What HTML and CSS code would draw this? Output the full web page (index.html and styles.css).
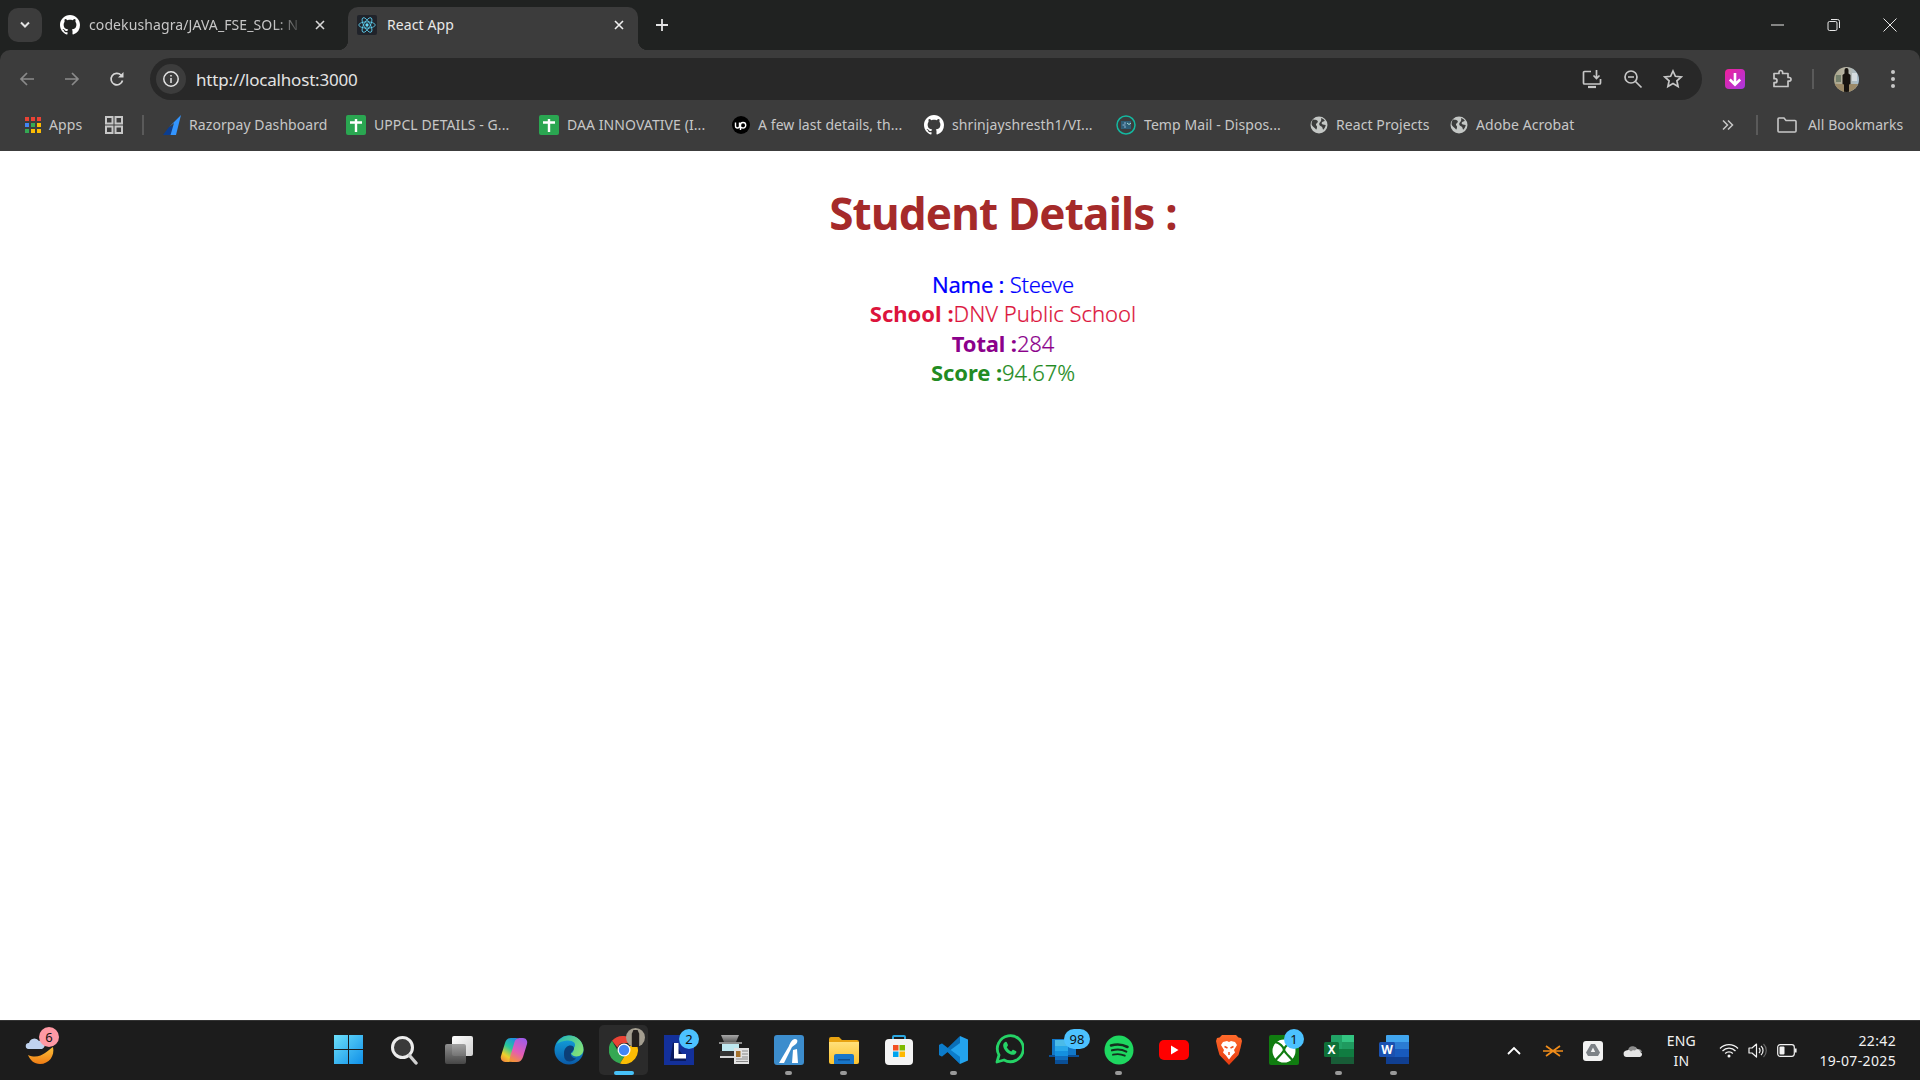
FILE: index.html
```html
<!DOCTYPE html>
<html lang="en">
<head>
<meta charset="UTF-8">
<meta name="viewport" content="width=device-width, initial-scale=1.0">
<title>React App</title>
<link rel="stylesheet" href="styles.css">
</head>
<body>

<svg class="sprite" width="0" height="0">
    <symbol id="github" viewBox="0 0 16 16">
        <path fill="currentColor" d="M8 0C3.58 0 0 3.58 0 8c0 3.54 2.29 6.53 5.47 7.59.4.07.55-.17.55-.38 0-.19-.01-.82-.01-1.49-2.01.37-2.53-.49-2.69-.94-.09-.23-.48-.94-.82-1.13-.28-.15-.68-.52-.01-.53.63-.01 1.08.58 1.23.82.72 1.21 1.87.87 2.33.66.07-.52.28-.87.51-1.07-1.78-.2-3.64-.89-3.64-3.95 0-.87.31-1.59.82-2.15-.08-.2-.36-1.02.08-2.12 0 0 .67-.21 2.2.82.64-.18 1.32-.27 2-.27s1.36.09 2 .27c1.53-1.04 2.2-.82 2.2-.82.44 1.1.16 1.92.08 2.12.51.56.82 1.27.82 2.15 0 3.07-1.87 3.75-3.65 3.95.29.25.54.73.54 1.48 0 1.07-.01 1.93-.01 2.2 0 .21.15.46.55.38A8.01 8.01 0 0 0 16 8c0-4.42-3.58-8-8-8z"/>
    </symbol>
    <symbol id="sheet" viewBox="0 0 20 20">
        <rect width="20" height="20" rx="2" fill="#2aa651"/>
        <path d="M4 7.5h12M10 4v13" stroke="#fff" stroke-width="2.4" fill="none"/>
    </symbol>
    <symbol id="globe" viewBox="0 0 18 18">
        <circle cx="9" cy="9" r="8.5" fill="#c4c7c5"/>
        <path fill="#3c3c3c" d="M3 3.6c1.7.3 3 .2 4.2 1 1.2.9.6 2-.4 2.6-1.1.7-1 1.8-.2 2.5.8.8.4 1.7.1 3.1-.2 1-.9.6-1.5-.4C3.6 11 2 9.8 1.6 8.5 1.5 6.5 2 5 3 3.6zM11 2c1.5.4 3 1.4 3.8 2.8-.9.9-2 .6-2.8 1.4-.8.9-.3 1.8.8 2.2 1 .4 2 .3 2.9.7-.2 1.8-1.1 3.5-2.6 4.6-.6-1.3-.5-2.5-1.7-3.2-1.2-.7-2.3-1.4-2.2-2.8.1-1.3 1.5-1.7 1.9-3 .2-.9.2-1.8-.1-2.7z"/>
    </symbol>
</svg>

<div class="browser">
    <div class="tabstrip">
        <button class="tab-search">
            <svg width="12" height="8" viewBox="0 0 12 8"><path d="M2 1.5l4 4 4-4" fill="none" stroke="#e3e3e3" stroke-width="2"/></svg>
        </button>
        <div class="tab">
            <svg class="tab-icon github-white" width="20" height="20"><use href="#github"/></svg>
            <span class="tab-title faded">codekushagra/JAVA_FSE_SOL: N</span>
            <span class="tab-close">
                <svg width="10" height="10" viewBox="0 0 10 10"><path d="M1 1l8 8M9 1l-8 8" stroke="#d8d8d8" stroke-width="1.6"/></svg>
            </span>
        </div>
        <div class="tab active">
            <span class="react-box">
                <svg width="18" height="18" viewBox="-12 -12 24 24" fill="none" stroke="#61dafb" stroke-width="1">
                    <circle r="2.2" fill="#61dafb" stroke="none"/>
                    <ellipse rx="11" ry="4.2"/>
                    <ellipse rx="11" ry="4.2" transform="rotate(60)"/>
                    <ellipse rx="11" ry="4.2" transform="rotate(120)"/>
                </svg>
            </span>
            <span class="tab-title">React App</span>
            <span class="tab-close">
                <svg width="10" height="10" viewBox="0 0 10 10"><path d="M1 1l8 8M9 1l-8 8" stroke="#f0f0f0" stroke-width="1.6"/></svg>
            </span>
        </div>
        <button class="new-tab">
            <svg width="14" height="14" viewBox="0 0 14 14"><path d="M7 1v12M1 7h12" stroke="#e3e3e3" stroke-width="1.8"/></svg>
        </button>
        <div class="window-controls">
            <span class="win-btn"><svg width="14" height="14" viewBox="0 0 14 14"><path d="M0 7h13" stroke="#e8e8e8" stroke-width="1"/></svg></span>
            <span class="win-btn"><svg width="14" height="14" viewBox="0 0 14 14" fill="none" stroke="#e8e8e8"><rect x="1" y="3.5" width="9" height="9" rx="1.5"/><path d="M4 1.5h6.5a2 2 0 0 1 2 2V10"/></svg></span>
            <span class="win-btn"><svg width="14" height="14" viewBox="0 0 14 14"><path d="M.5.5l13 13M13.5.5l-13 13" stroke="#e8e8e8" stroke-width="1"/></svg></span>
        </div>
    </div>

    <div class="toolbar">
        <span class="nav-btn">
            <svg width="18" height="18" viewBox="0 0 18 18" fill="none" stroke="#8a8a8a" stroke-width="1.7"><path d="M16 9H3M9 3L3 9l6 6"/></svg>
        </span>
        <span class="nav-btn">
            <svg width="18" height="18" viewBox="0 0 18 18" fill="none" stroke="#8a8a8a" stroke-width="1.7"><path d="M2 9h13M9 3l6 6-6 6"/></svg>
        </span>
        <span class="nav-btn">
            <svg width="18" height="18" viewBox="0 0 18 18" fill="none" stroke="#d6d6d6" stroke-width="1.7"><path d="M14.5 10.5A5.8 5.8 0 1 1 13 5"/><path fill="#d6d6d6" stroke="none" d="M15.5 2v5.5H10z"/></svg>
        </span>
        <div class="omnibox">
            <span class="site-info">
                <svg width="18" height="18" viewBox="0 0 18 18" fill="none" stroke="#e3e3e3" stroke-width="1.5"><circle cx="9" cy="9" r="7.2"/><path d="M9 8v5M9 5v1.6"/></svg>
            </span>
            <span class="url">http://localhost:3000</span>
            <span class="omni-actions">
                <svg width="22" height="22" viewBox="0 0 22 22" fill="none" stroke="#c7c7c7" stroke-width="1.7"><path d="M10 3.5H3.5a1 1 0 0 0-1 1V15a1 1 0 0 0 1 1h15a1 1 0 0 0 1-1v-4"/><path d="M7 19h8" stroke-width="2.2"/><path d="M15.5 2v8M12.5 7.5l3 3 3-3"/></svg>
                <svg width="20" height="20" viewBox="0 0 20 20" fill="none" stroke="#c7c7c7" stroke-width="1.7"><circle cx="8" cy="8" r="6"/><path d="M5 8h6M12.5 12.5l6 6"/></svg>
                <svg width="20" height="20" viewBox="0 0 20 20" fill="none" stroke="#c7c7c7" stroke-width="1.7"><path d="M10 2l2.4 5.3 5.8.6-4.3 3.9 1.2 5.7L10 14.6l-5.1 2.9 1.2-5.7L1.8 7.9l5.8-.6z"/></svg>
            </span>
        </div>
        <div class="toolbar-right">
            <span class="ext-pink">
                <svg width="14" height="15" viewBox="0 0 14 15" fill="none" stroke="#fff" stroke-width="2.6"><path d="M7 1v11M1.8 7.5L7 12.7l5.2-5.2"/></svg>
            </span>
            <svg class="puzzle" width="20" height="20" viewBox="0 0 20 20" fill="none" stroke="#c7c7c7" stroke-width="1.7"><path d="M2 7V4.5h5V3.3a1.8 1.8 0 0 1 3.6 0v1.2h5.4V8.5h1.2a1.8 1.8 0 0 1 0 3.6H16V17.5H2v-3.8h1a2 2 0 0 0 0-4H2z" stroke-linejoin="round"/></svg>
            <span class="tool-sep"></span>
            <svg class="avatar" width="25" height="25" viewBox="0 0 25 25">
                <defs>
                    <clipPath id="avatarClip"><circle cx="12.5" cy="12.5" r="12.5"/></clipPath>
                    <linearGradient id="avatarBg" x1="0" y1="0" x2="1" y2="0"><stop offset="0" stop-color="#a9a58a"/><stop offset=".5" stop-color="#b9b6a8"/><stop offset="1" stop-color="#a8c0d0"/></linearGradient>
                </defs>
                <g clip-path="url(#avatarClip)">
                    <rect width="25" height="25" fill="url(#avatarBg)"/>
                    <rect y="17" width="25" height="8" fill="#9c8a68"/>
                    <rect x="18" y="6" width="5" height="8" fill="#d6dde0"/>
                    <rect x="2" y="8" width="5" height="7" fill="#74806c"/>
                    <path fill="#17130f" d="M10.5 3a2 2 0 0 1 4 0v3.5l2 1.5v9l-1.5.5V25h-5v-7.500L8.500 17V8l2-1.500z"/>
                </g>
            </svg>
            <svg class="menu-dots" width="4" height="18" viewBox="0 0 4 18" fill="#c7c7c7"><circle cx="2" cy="2" r="2"/><circle cx="2" cy="9" r="2"/><circle cx="2" cy="16" r="2"/></svg>
        </div>
    </div>

    <div class="bookmarks">
        <a class="bm">
            <svg width="16" height="16" viewBox="0 0 16 16">
                <rect x="0" y="0" width="4" height="4" fill="#ea4335"/><rect x="6" y="0" width="4" height="4" fill="#ea4335"/><rect x="12" y="0" width="4" height="4" fill="#ea4335"/>
                <rect x="0" y="6" width="4" height="4" fill="#4285f4"/><rect x="6" y="6" width="4" height="4" fill="#34a853"/><rect x="12" y="6" width="4" height="4" fill="#fbbc04"/>
                <rect x="0" y="12" width="4" height="4" fill="#34a853"/><rect x="6" y="12" width="4" height="4" fill="#fbbc04"/><rect x="12" y="12" width="4" height="4" fill="#fbbc04"/>
            </svg>
            <span>Apps</span>
        </a>
        <a class="bm">
            <svg width="18" height="18" viewBox="0 0 18 18" fill="none" stroke="#c7c7c7" stroke-width="2"><rect x="1" y="1" width="6.5" height="6.5"/><rect x="10.5" y="1" width="6.5" height="6.5"/><rect x="1" y="10.5" width="6.5" height="6.5"/><rect x="10.5" y="10.5" width="6.5" height="6.5"/></svg>
        </a>
        <span class="bm-sep"></span>
        <a class="bm">
            <svg width="18" height="20" viewBox="0 0 18 20"><path fill="#0b3d8f" d="M0 20l6-8 4-1-2.5 9z"/><path fill="#3395ff" d="M6 12L18 0l-5 20H7.500L11 8z"/></svg>
            <span>Razorpay Dashboard</span>
        </a>
        <a class="bm">
            <svg width="20" height="20"><use href="#sheet"/></svg>
            <span>UPPCL DETAILS - G...</span>
        </a>
        <a class="bm">
            <svg width="20" height="20"><use href="#sheet"/></svg>
            <span>DAA INNOVATIVE (I...</span>
        </a>
        <a class="bm">
            <svg width="18" height="18" viewBox="0 0 18 18"><circle cx="9" cy="9" r="9" fill="#000"/><path d="M3.5 6.5V10a2 2 0 0 0 4 0V6.5c0 3 1 5.5 3.5 5.5a2.7 2.7 0 0 0 0-5.5 2.5 2.5 0 0 0-2.500 2.500V14" fill="none" stroke="#fff" stroke-width="1.4"/></svg>
            <span>A few last details, th...</span>
        </a>
        <a class="bm">
            <svg class="github-white" width="20" height="20"><use href="#github"/></svg>
            <span>shrinjayshresth1/VI...</span>
        </a>
        <a class="bm">
            <svg width="20" height="20" viewBox="0 0 20 20" fill="none"><circle cx="10" cy="10" r="9" stroke="#14b8a0" stroke-width="1.5"/><rect x="5" y="6" width="10" height="8" fill="#2e5f78"/><path d="M8 8h2M6.5 10h3M8 12h2" stroke="#9bd" stroke-width=".9"/><path d="M11 8l2 1.5L15 8" stroke="#cfe" stroke-width=".8"/></svg>
            <span>Temp Mail - Dispos...</span>
        </a>
        <a class="bm">
            <svg width="18" height="18"><use href="#globe"/></svg>
            <span>React Projects</span>
        </a>
        <a class="bm">
            <svg width="18" height="18"><use href="#globe"/></svg>
            <span>Adobe Acrobat</span>
        </a>
        <a class="bm">
            <svg width="12" height="12" viewBox="0 0 12 12" fill="none" stroke="#c7c7c7" stroke-width="1.5"><path d="M1 1.5L5.5 6 1 10.5M6 1.5L10.5 6 6 10.5"/></svg>
        </a>
        <span class="bm-sep"></span>
        <a class="bm bm-all">
            <svg width="20" height="18" viewBox="0 0 20 18" fill="none" stroke="#c7c7c7" stroke-width="1.6"><path d="M1 3a1 1 0 0 1 1-1h5l2 2.500h9a1 1 0 0 1 1 1V15a1 1 0 0 1-1 1H2a1 1 0 0 1-1-1z"/></svg>
            <span>All Bookmarks</span>
        </a>
    </div>
</div>

<main class="page">
    <h1>Student Details :</h1>
    <p class="name"><span class="key">Name : </span>Steeve</p>
    <p class="school"><b>School :</b>DNV Public School</p>
    <p class="total"><b>Total :</b>284</p>
    <p class="score"><b>Score :</b>94.67%</p>
</main>

<footer class="taskbar">
    <div class="weather">
        <span class="tile">
            <svg width="30" height="30" viewBox="0 0 30 30">
                <defs><linearGradient id="moon" x1="0" y1="0" x2="0" y2="1"><stop offset="0" stop-color="#fcc13a"/><stop offset="1" stop-color="#ef7c14"/></linearGradient></defs>
                <path fill="url(#moon)" d="M28 12c2 9-4 17-13 17C9 29 5 25 3 20c7 3 13 1 17-2 3-2 5-4 8-6z"/>
                <path fill="#bfd2ee" d="M3.5 14a3 3 0 0 1 .5-6 5.5 5.5 0 0 1 10-2 4 4 0 0 1 3 8z"/>
            </svg>
            <span class="badge pink">6</span>
        </span>
    </div>

    <div class="apps">
        <span class="tile">
            <svg width="29" height="29" viewBox="0 0 29 29">
                <defs><linearGradient id="win" x1="0" y1="0" x2="1" y2="1"><stop offset="0" stop-color="#6ce0fb"/><stop offset="1" stop-color="#0f8fe8"/></linearGradient></defs>
                <path fill="url(#win)" d="M0 0h14v14H0zM15 0h14v14H15zM0 15h14v14H0zM15 15h14v14H15z"/>
            </svg>
        </span>
        <span class="tile">
            <svg width="28" height="30" viewBox="0 0 28 30" fill="none"><circle cx="12.5" cy="12.5" r="10" fill="#3a3a3a" stroke="#ececec" stroke-width="3"/><path d="M19.5 20.5l6.5 7.5" stroke="#d0d0d0" stroke-width="3.4" stroke-linecap="round"/></svg>
        </span>
        <span class="tile">
            <svg width="30" height="30" viewBox="0 0 30 30">
                <defs>
                    <linearGradient id="tvA" x1="0" y1="0" x2="1" y2="1"><stop offset="0" stop-color="#fff"/><stop offset="1" stop-color="#cfcfcf"/></linearGradient>
                    <linearGradient id="tvB" x1="0" y1="0" x2="0" y2="1"><stop offset="0" stop-color="#9a9a9a"/><stop offset="1" stop-color="#4a4a4a"/></linearGradient>
                </defs>
                <rect x="8" y="1" width="21" height="20" rx="2" fill="url(#tvA)"/>
                <rect x="1" y="9" width="21" height="20" rx="2" fill="url(#tvB)" opacity=".92"/>
            </svg>
        </span>
        <span class="tile">
            <svg width="28" height="26" viewBox="0 0 28 26">
                <defs>
                    <linearGradient id="copA" x1=".7" y1="0" x2=".2" y2="1"><stop offset="0" stop-color="#1f8fe0"/><stop offset=".4" stop-color="#27c89a"/><stop offset=".75" stop-color="#f0d02a"/><stop offset="1" stop-color="#f28a3c"/></linearGradient>
                    <linearGradient id="copB" x1=".3" y1="1" x2=".7" y2="0"><stop offset="0" stop-color="#a05ce8"/><stop offset=".6" stop-color="#e45cb4"/><stop offset="1" stop-color="#f2913c"/></linearGradient>
                </defs>
                <path fill="url(#copA)" d="M11 1h5c2 0 3 1 2.5 3l-5 17c-1 3-3 4-5 4H5c-3 0-5-3-4-6L5 6c1-3 3-5 6-5z"/>
                <path fill="url(#copB)" transform="rotate(180 14 13)" d="M11 1h5c2 0 3 1 2.5 3l-5 17c-1 3-3 4-5 4H5c-3 0-5-3-4-6L5 6c1-3 3-5 6-5z"/>
            </svg>
        </span>
        <span class="tile">
            <svg width="30" height="30" viewBox="0 0 30 30">
                <defs>
                    <linearGradient id="edgeA" x1="0" y1="0" x2="1" y2=".6"><stop offset="0" stop-color="#1fb5b8"/><stop offset="1" stop-color="#7fe07a"/></linearGradient>
                    <linearGradient id="edgeB" x1="0" y1="0" x2="0" y2="1"><stop offset="0" stop-color="#13a5e0"/><stop offset="1" stop-color="#0a5aa8"/></linearGradient>
                </defs>
                <circle cx="15" cy="15" r="14.5" fill="url(#edgeB)"/>
                <path fill="url(#edgeA)" d="M3 9C5 4 10 .5 15 .5c8 0 14.5 6 14.5 14 0 4-3 7-7 7-3 0-5-1.5-5.5-3 2-1 3-2.5 2.5-5C24 8 18 5 13 5.5 9 6 5 7 3 9z"/>
                <path fill="#0c3f78" d="M10 18c0-5 3.5-7.5 6.5-7.5 2 0 3.5 1.2 3.5 3 0 2-2 2.5-3 4.5-.7 2 .8 5 5 5.5-2.5 2.5-6 3.5-9 2.5C10 24 10 21 10 18z"/>
            </svg>
        </span>
        <span class="tile chrome-tile">
            <svg width="30" height="30" viewBox="0 0 30 30">
                <path fill="#ea4335" d="M15 1a14 14 0 0 1 12.1 7H15a7 7 0 0 0-6.5 4.4L3 5.8A14 14 0 0 1 15 1z"/>
                <path fill="#34a853" d="M3 5.8l6 10.4a7 7 0 0 0 6.5 4.8L11 28.5A14 14 0 0 1 3 5.8z"/>
                <path fill="#fbbc04" d="M27.1 8A14 14 0 0 1 11 28.5l6.2-10A7 7 0 0 0 20 11.5z"/>
                <circle cx="15" cy="15" r="6.5" fill="#fff"/><circle cx="15" cy="15" r="5.2" fill="#4285f4"/>
            </svg>
            <svg class="chrome-avatar" width="19" height="19" viewBox="0 0 18 18"><circle cx="9" cy="9" r="9" fill="#a49e90"/><path fill="#24201e" d="M7 2h4l1.5 3.5V18h-7V5.5z"/></svg>
            <span class="pin blue"></span>
        </span>
        <span class="tile">
            <svg width="30" height="30" viewBox="0 0 30 30"><rect width="30" height="30" fill="#13309a"/><path fill="#0a1a5c" d="M9 7L6 26h16v-2z"/><rect x="10" y="8" width="4.5" height="15" fill="#fff"/><rect x="10" y="19" width="12" height="4.5" fill="#fff"/></svg>
            <span class="badge">2</span>
        </span>
        <span class="tile">
            <svg width="32" height="31" viewBox="0 0 32 31">
                <defs><linearGradient id="scanTop" x1="0" y1="0" x2="0" y2="1"><stop offset="0" stop-color="#a8a8a8"/><stop offset="1" stop-color="#5c5c5c"/></linearGradient></defs>
                <path fill="url(#scanTop)" d="M3 1h18l-3 7H6z"/>
                <rect x="1" y="8" width="23" height="2" fill="#8c8c8c"/>
                <rect x="4" y="10" width="17" height="7" fill="#bfe8f0"/>
                <rect x="2" y="17" width="19" height="6" fill="#333"/>
                <rect x="2" y="22" width="16" height="2" fill="#d4d4d4"/>
                <rect x="16" y="14" width="15" height="16" fill="#e2e2e2"/>
                <rect x="18" y="17" width="4.5" height="6" fill="#a5722c"/>
                <path d="M24 17h6M24 20h6M24 23h6M18 25h12M18 27.5h12" stroke="#888"/>
            </svg>
        </span>
        <span class="tile">
            <svg width="30" height="30" viewBox="0 0 30 30"><rect width="30" height="30" rx="3" fill="#3c8dcd"/><path fill="#fff" d="M5 28L15 11c1-3 3-7 6-7 3 0 3 3 1 5l-4 3L10 28zM19 15l4-1 1 14h-6z"/></svg>
            <span class="pin"></span>
        </span>
        <span class="tile">
            <svg width="30" height="28" viewBox="0 0 30 28">
                <defs><linearGradient id="folder" x1="0" y1="0" x2="0" y2="1"><stop offset="0" stop-color="#ffe07a"/><stop offset="1" stop-color="#fcc22c"/></linearGradient></defs>
                <path fill="#e8a311" d="M0 3a2 2 0 0 1 2-2h8l3 3h15a2 2 0 0 1 2 2v4H0z"/>
                <path fill="url(#folder)" d="M0 6h30v20a2 2 0 0 1-2 2H2a2 2 0 0 1-2-2z"/>
                <path fill="#1876c9" d="M5 20a2 2 0 0 1 2-2h16a2 2 0 0 1 2 2v8H5z"/>
                <rect x="9" y="23" width="12" height="1.5" fill="#0d4f92"/>
            </svg>
            <span class="pin"></span>
        </span>
        <span class="tile">
            <svg width="30" height="32" viewBox="0 0 30 32"><path d="M9 6V3a1 1 0 0 1 1-1h10a1 1 0 0 1 1 1v3" fill="none" stroke="#2ba7e0" stroke-width="2"/><rect x="1" y="5" width="28" height="26" rx="4" fill="#f4f4f4"/><rect x="9" y="11" width="5.5" height="5.5" fill="#f25022"/><rect x="15.5" y="11" width="5.5" height="5.5" fill="#7fba00"/><rect x="9" y="17.5" width="5.5" height="5.5" fill="#00a4ef"/><rect x="15.5" y="17.5" width="5.5" height="5.5" fill="#ffb900"/></svg>
        </span>
        <span class="tile">
            <svg width="30" height="30" viewBox="0 0 30 30"><path fill="#0a6fb8" d="M21 1L8.5 13 3 8.5 0 10v10l3 1.5L8.5 17 21 29z"/><path fill="#23a3ee" d="M21 1l8 3.5v21L21 29V8L11.5 15 21 22z"/><path fill="#0d86d7" d="M0 10l3-1.5L21 22v7L8.5 17 3 21.5 0 20z" opacity=".6"/></svg>
            <span class="pin"></span>
        </span>
        <span class="tile">
            <svg width="30" height="31" viewBox="0 0 30 31" fill="none"><path d="M3 28l2-7A13 13 0 1 1 10 26z" stroke="#25d366" stroke-width="2.8" stroke-linejoin="round"/><path fill="#25d366" d="M10.5 8.5c1-1 2-.8 2.4 0l1 2.3c.2.6 0 1-.4 1.5l-.7.9c1 2 2.5 3.3 4.4 4.2l1.1-1.2c.4-.4.8-.5 1.3-.3l2.2 1.1c.7.4.8 1.2.3 2-1 1.6-2.6 2.2-4.5 1.7-4-1-7.4-4.4-8.3-8.2-.3-1.5 0-3 1.2-4z"/></svg>
        </span>
        <span class="tile">
            <svg width="30" height="30" viewBox="0 0 30 30">
                <rect x="3" y="4" width="24" height="16" fill="#1278c8"/>
                <path fill="#0a4f96" d="M0 20h30v2H0z"/>
                <rect x="6" y="5" width="13" height="6" fill="#4bbbe8"/>
                <rect x="6" y="11" width="13" height="5" fill="#28a8ea"/>
                <rect x="6" y="16" width="13" height="5" fill="#1490df"/>
                <rect x="6" y="21" width="13" height="4" fill="#0f6cbd"/>
                <rect x="6" y="25" width="13" height="4" fill="#0a4f96"/>
            </svg>
            <span class="badge wide">98</span>
        </span>
        <span class="tile">
            <svg width="30" height="30" viewBox="0 0 30 30" fill="none" stroke="#14301f" stroke-linecap="round"><circle cx="15" cy="15" r="14.5" fill="#1ed760" stroke="none"/><path d="M7 10.5c5.5-1.6 11.5-1.2 16.5 1.5" stroke-width="2.6"/><path d="M8 15.3c4.800-1.300 10-1 14.300 1.300" stroke-width="2.2"/><path d="M9 19.7c4-1 8-.8 11.800 1" stroke-width="1.9"/></svg>
            <span class="pin"></span>
        </span>
        <span class="tile">
            <svg width="30" height="30" viewBox="0 0 30 30"><rect y="5" width="30" height="20" rx="5" fill="#f00"/><path d="M12 10.5l7.5 4.5-7.500 4.500z" fill="#fff"/></svg>
        </span>
        <span class="tile">
            <svg width="26" height="30" viewBox="0 0 26 30">
                <defs><linearGradient id="brave" x1="0" y1="0" x2="0" y2="1"><stop offset="0" stop-color="#ff6a2a"/><stop offset="1" stop-color="#e63a10"/></linearGradient></defs>
                <path fill="url(#brave)" d="M6 0h14l2.5 2.5L25 3l1 3-1.5 7-2 7-9.5 10-9.500-10-2-7L0 6l1-3 2.500-.5z"/>
                <path fill="#fff" d="M7 7l4-1 2 1 2-1 4 1 2 3-3 5 1 2.500-3 3-3 4-3-4-3-3 1-2.500-3-5z"/>
                <path stroke="#f1501f" stroke-width="1.5" d="M8.500 11.500l3 1.500M17.500 11.500l-3 1.500M13 17v3"/>
            </svg>
        </span>
        <span class="tile">
            <svg width="30" height="30" viewBox="0 0 30 30" fill="none"><rect width="30" height="30" rx="2" fill="#107c10"/><circle cx="15" cy="16" r="11.5" fill="#fff"/><path d="M6 7c4 1 8 4 9 8-1 3-6 7-9 11M24 7c-4 1-8 4-9 8 1 3 6 7 9 11" stroke="#107c10" stroke-width="2.3"/></svg>
            <span class="badge">1</span>
        </span>
        <span class="tile">
            <svg width="30" height="30" viewBox="0 0 30 30"><rect x="7" width="23" height="29" rx="1" fill="#21a366"/><rect x="18" width="12" height="7" fill="#33c481"/><rect x="7" y="14" width="23" height="8" fill="#107c41"/><rect x="18" y="7" width="12" height="7" fill="#1f9a5f"/><rect x="7" y="22" width="23" height="7" fill="#185c37"/><rect x="0" y="7" width="15" height="15" rx="1.5" fill="#0f7038"/><text class="office-letter" x="7.5" y="19">X</text></svg>
            <span class="pin"></span>
        </span>
        <span class="tile">
            <svg width="30" height="30" viewBox="0 0 30 30"><rect x="7" width="23" height="29" rx="1" fill="#41a5ee"/><rect x="7" y="7" width="23" height="7" fill="#2b7cd3"/><rect x="7" y="14" width="23" height="8" fill="#185abd"/><rect x="7" y="22" width="23" height="7" fill="#103f91"/><rect x="0" y="7" width="16" height="15" rx="1.5" fill="#1a51b0"/><text class="office-letter" x="8" y="19">W</text></svg>
            <span class="pin"></span>
        </span>
    </div>

    <div class="tray">
        <svg class="tray-chevron" width="14" height="9" viewBox="0 0 14 9" fill="none" stroke="#fff" stroke-width="1.8"><path d="M1 8l6-6 6 6"/></svg>
        <svg class="tray-icon" width="20" height="14" viewBox="0 0 20 14" fill="none" stroke="#f08c1a" stroke-width="1.7"><path d="M0 7h20M3 2l14 10M17 2L3 12"/><circle cx="10" cy="3" r="1.5" fill="#222" stroke="none"/></svg>
        <span class="drive-box">
            <svg width="14" height="13" viewBox="0 0 14 13"><path fill="#7d8287" d="M5 0h4l5 8.500-2 3.500H2L0 8.500zM7 3.500L4.800 8h4.400z" fill-rule="evenodd"/></svg>
        </span>
        <svg class="tray-icon" width="20" height="13" viewBox="0 0 20 13"><path fill="#8d8d8d" d="M5 7a5 5 0 0 1 9.500-2A4 4 0 0 1 19 8H5z"/><path fill="#e6e6e6" d="M3.500 13a3.300 3.300 0 0 1-.3-6.500C5 5.500 7 6 8 7.500a3.500 3.500 0 0 1 4-1 3 3 0 0 1 5.300 1.500A2.600 2.600 0 0 1 17 13z"/></svg>
        <div class="lang">ENG<br>IN</div>
        <svg class="tray-sys" width="20" height="15" viewBox="0 0 20 15" fill="none" stroke="#f2f2f2" stroke-width="1.3"><path d="M1 5.500a12.500 12.500 0 0 1 18 0M3.500 8a9 9 0 0 1 13 0M6.200 10.500a5.200 5.200 0 0 1 7.600 0"/><circle cx="10" cy="13" r="1.5" fill="#f2f2f2" stroke="none"/></svg>
        <svg class="tray-sys" width="20" height="15" viewBox="0 0 20 15" fill="none" stroke="#f2f2f2" stroke-width="1.2"><path d="M1 5v5h3l4.500 4V1L4 5z" stroke-linejoin="round"/><path d="M11 5a3.500 3.500 0 0 1 0 5M13 3a6 6 0 0 1 0 9"/><path d="M15.500 1a9 9 0 0 1 0 13" stroke="#666"/></svg>
        <svg class="tray-sys" width="20" height="13" viewBox="0 0 20 13" fill="none"><rect x=".7" y=".7" width="16.600" height="11.600" rx="2.500" stroke="#f2f2f2" stroke-width="1.2"/><rect x="2.500" y="2.500" width="5" height="8" rx="1" fill="#f2f2f2"/><rect x="18" y="4.500" width="1.600" height="4" fill="#f2f2f2"/></svg>
        <div class="clock">22:42<br>19-07-2025</div>
    </div>
</footer>

</body>
</html>
```

FILE: styles.css
```css
* {
    box-sizing: border-box;
}

html, body {
    height: 100%;
}

body {
    margin: 0;
    display: flex;
    flex-direction: column;
    background-color: #fff;
    font-family: "Noto Sans", "Open Sans", sans-serif;
    overflow: hidden;
}

button {
    border: none;
    padding: 0;
    background: none;
}

svg {
    display: block;
    flex-shrink: 0;
}

.sprite {
    position: absolute;
}

.github-white {
    color: #fff;
}

.browser {
    background-color: #202221;
}

/* tab strip */
.tabstrip {
    display: flex;
    align-items: flex-end;
    height: 50px;
    padding-left: 8px;
}

.tab-search {
    display: flex;
    align-items: center;
    justify-content: center;
    width: 34px;
    height: 34px;
    margin-bottom: 8px;
    border-radius: 10px;
    background-color: #3c3c3c;
}

.tab {
    display: flex;
    align-items: center;
    width: 306px;
    height: 43px;
    padding: 0 23px 8px 18px;
    font-size: 14px;
    color: #c7c7c7;
    border-radius: 10px 10px 0 0;
}

.tab.active {
    position: relative;
    width: 290px;
    padding: 0 14px 8px 9px;
    background-color: #3c3c3c;
    color: #e8e8e8;
}

/* curved feet of the active tab */
.tab.active::before,
.tab.active::after {
    content: "";
    position: absolute;
    bottom: 0;
    width: 10px;
    height: 10px;
    background: radial-gradient(circle at 0 0, #202221 10px, #3c3c3c 10.5px);
}

.tab.active::before {
    left: -10px;
}

.tab.active::after {
    right: -10px;
    background: radial-gradient(circle at 100% 0, #202221 10px, #3c3c3c 10.5px);
}

.tab-icon {
    margin-right: 9px;
}

.react-box {
    display: flex;
    align-items: center;
    justify-content: center;
    width: 20px;
    height: 20px;
    margin-right: 10px;
    border-radius: 2px;
    background-color: #20232a;
}

.tab-title {
    flex: 1;
    overflow: hidden;
    white-space: nowrap;
    letter-spacing: 0.1px;
}

.tab-title.faded {
    -webkit-mask-image: linear-gradient(to right, #000 85%, transparent 100%);
    mask-image: linear-gradient(to right, #000 85%, transparent 100%);
}

.tab-close {
    display: flex;
    margin-left: 9px;
}

.new-tab {
    display: flex;
    align-items: center;
    justify-content: center;
    width: 28px;
    height: 28px;
    margin: 0 0 11px 10px;
}

.window-controls {
    display: flex;
    align-self: flex-start;
    margin-left: auto;
    padding-right: 2px;
}

.win-btn {
    display: flex;
    justify-content: center;
    width: 56px;
    padding-top: 18px;
}

/* toolbar */
.toolbar {
    display: flex;
    align-items: center;
    height: 50px;
    padding: 8px 0 0 4px;
    background-color: #3c3c3c;
    border-radius: 10px 10px 0 0;
}

.nav-btn {
    display: flex;
    justify-content: center;
    width: 45px;
}

.omnibox {
    display: flex;
    align-items: center;
    width: 1552px;
    height: 42px;
    margin-left: 11px;
    padding: 0 19px 0 6px;
    border-radius: 21px;
    background-color: #282828;
}

.site-info {
    display: flex;
    align-items: center;
    justify-content: center;
    width: 30px;
    height: 30px;
    border-radius: 50%;
    background-color: #3c3c3c;
}

.url {
    margin-left: 10px;
    font-size: 17px;
    letter-spacing: -0.2px;
    color: #e3e3e3;
}

.omni-actions {
    display: flex;
    align-items: center;
    gap: 20px;
    margin-left: auto;
}

.toolbar-right {
    display: flex;
    align-items: center;
    padding-left: 23px;
}

.ext-pink {
    display: flex;
    align-items: center;
    justify-content: center;
    width: 20px;
    height: 20px;
    border-radius: 4px;
    background: linear-gradient(135deg, #f0209a, #a838e0);
}

.puzzle {
    margin-left: 27px;
}

.tool-sep {
    width: 2px;
    height: 20px;
    margin-left: 20px;
    background-color: #5a5a5a;
}

.avatar {
    margin-left: 20px;
}

.menu-dots {
    margin-left: 32px;
}

/* bookmarks */
.bookmarks {
    display: grid;
    grid-template-columns: 80px 37px 21px 183px 193px 193px 192px 192px 194px 140px 272px 34px 21px 1fr;
    align-items: center;
    height: 51px;
    padding: 0 0 2px 25px;
    background-color: #3c3c3c;
    font-size: 14px;
    letter-spacing: 0.08px;
    color: #c7c7c7;
    white-space: nowrap;
}

.bm {
    display: flex;
    align-items: center;
    gap: 8px;
}

.bm-all {
    gap: 11px;
}

.bm-sep {
    width: 2px;
    height: 20px;
    background-color: #5a5a5a;
}

/* page */
.page {
    flex: 1;
    padding: 33px 0 0 86px;
    text-align: center;
    font-size: 22px;
    line-height: 29.3px;
    font-weight: 300;
}

.page h1 {
    margin: 0 0 28px;
    font-size: 44px;
    line-height: 58px;
    font-weight: 700;
    letter-spacing: -0.8px;
    color: #a52a2a;
}

.page p {
    margin: 0;
    -webkit-text-stroke: 0.2px currentColor;
}

.page b {
    font-weight: 700;
    -webkit-text-stroke: 0;
}

.name {
    letter-spacing: -0.25px;
    color: #0000ff;
}

.name .key {
    font-weight: 400;
}

.school {
    color: #dc143c;
}

.total {
    letter-spacing: -0.15px;
    color: #8b008b;
}

.score {
    letter-spacing: -0.1px;
    color: #228b22;
}

/* taskbar */
.taskbar {
    display: flex;
    align-items: center;
    height: 60px;
    background-color: #1c1c1c;
    border-top: 1px solid #333;
    color: #f2f2f2;
}

.weather {
    display: flex;
    width: 320px;
    padding-left: 12px;
}

.apps {
    display: flex;
    margin-left: 1px;
}

.tile {
    position: relative;
    display: flex;
    align-items: center;
    justify-content: center;
    width: 55px;
    height: 50px;
    margin-bottom: 2px;
}

.chrome-tile {
    width: 49px;
    margin: 0 3px 2px;
    border-radius: 5px;
    background-color: #2b2b2b;
}

.chrome-avatar {
    position: absolute;
    top: 3px;
    right: 3px;
}

.pin {
    position: absolute;
    left: 24px;
    bottom: 0;
    width: 7px;
    height: 4px;
    border-radius: 2px;
    background-color: #9a9a9a;
}

.pin.blue {
    left: 15px;
    width: 20px;
    background-color: #47c1f7;
}

.badge {
    position: absolute;
    top: 4px;
    right: 7px;
    min-width: 20px;
    height: 20px;
    border-radius: 10px;
    background-color: #4cc2ff;
    color: #111;
    font-size: 13px;
    line-height: 20px;
    text-align: center;
}

.badge.wide {
    right: 1px;
    min-width: 26px;
}

.badge.pink {
    top: 2px;
    right: 8px;
    background-color: #ff99a4;
}

.office-letter {
    fill: #fff;
    font-size: 12px;
    font-weight: 700;
    text-anchor: middle;
}

.tray {
    display: flex;
    align-items: center;
    margin-left: auto;
    padding-right: 24px;
}

.tray-chevron {
    margin-right: 22px;
}

.tray-icon {
    margin-right: 20px;
}

.drive-box {
    display: flex;
    align-items: center;
    justify-content: center;
    width: 20px;
    height: 20px;
    margin-right: 20px;
    border-radius: 3px;
    background-color: #f2f2f2;
}

.lang {
    width: 40px;
    margin: 0 18px 0 -2px;
    font-size: 14px;
    line-height: 20px;
    letter-spacing: 0.2px;
    text-align: center;
}

.tray-sys {
    margin-right: 9px;
}

.clock {
    margin-left: 13px;
    font-size: 14px;
    line-height: 20px;
    letter-spacing: 0.35px;
    text-align: right;
}
```
